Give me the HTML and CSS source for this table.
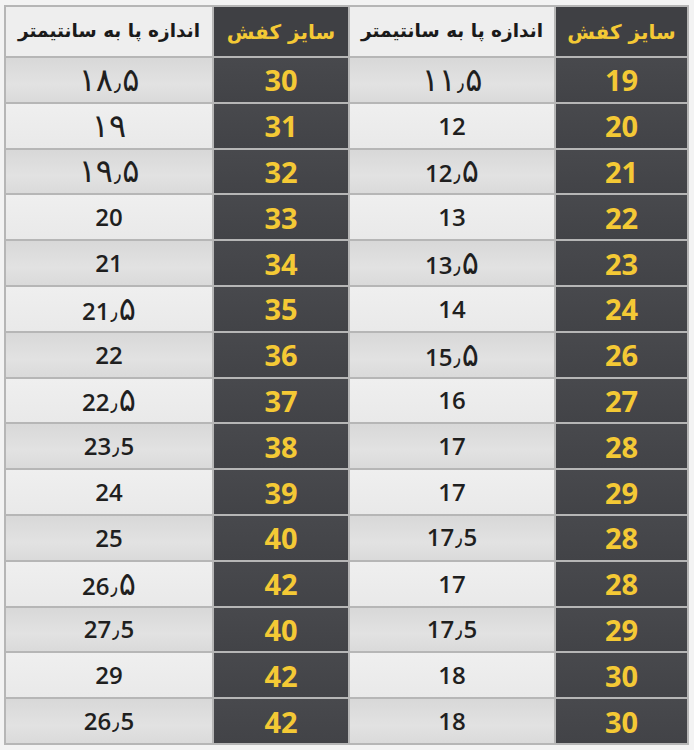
FILE: index.html
```html
<!DOCTYPE html>
<html lang="fa" dir="rtl">
<head>
<meta charset="utf-8">
<title>جدول سایز کفش</title>
<link rel="stylesheet" href="styles.css">
</head>
<body>
<div class="sheet">
  <div class="cell head size">سایز کفش</div>
  <div class="cell head cm">اندازه پا به سانتیمتر</div>
  <div class="cell head size">سایز کفش</div>
  <div class="cell head cm">اندازه پا به سانتیمتر</div>

  <div class="cell size">19</div><div class="cell cm odd"><span class="num"><span class="fa">۱۱</span><span class="sep">٫</span><span class="fa">۵</span></span></div><div class="cell size">30</div><div class="cell cm odd"><span class="num"><span class="fa">۱۸</span><span class="sep">٫</span><span class="fa">۵</span></span></div>
  <div class="cell size">20</div><div class="cell cm"><span class="num">12</span></div><div class="cell size">31</div><div class="cell cm"><span class="num"><span class="fa">۱۹</span></span></div>
  <div class="cell size">21</div><div class="cell cm odd"><span class="num">12<span class="sep">٫</span><span class="fa">۵</span></span></div><div class="cell size">32</div><div class="cell cm odd"><span class="num"><span class="fa">۱۹</span><span class="sep">٫</span><span class="fa">۵</span></span></div>
  <div class="cell size">22</div><div class="cell cm"><span class="num">13</span></div><div class="cell size">33</div><div class="cell cm"><span class="num">20</span></div>
  <div class="cell size">23</div><div class="cell cm odd"><span class="num">13<span class="sep">٫</span><span class="fa">۵</span></span></div><div class="cell size">34</div><div class="cell cm odd"><span class="num">21</span></div>
  <div class="cell size">24</div><div class="cell cm"><span class="num">14</span></div><div class="cell size">35</div><div class="cell cm"><span class="num">21<span class="sep">٫</span><span class="fa">۵</span></span></div>
  <div class="cell size">26</div><div class="cell cm odd"><span class="num">15<span class="sep">٫</span><span class="fa">۵</span></span></div><div class="cell size">36</div><div class="cell cm odd"><span class="num">22</span></div>
  <div class="cell size">27</div><div class="cell cm"><span class="num">16</span></div><div class="cell size">37</div><div class="cell cm"><span class="num">22<span class="sep">٫</span><span class="fa">۵</span></span></div>
  <div class="cell size">28</div><div class="cell cm odd"><span class="num">17</span></div><div class="cell size">38</div><div class="cell cm odd"><span class="num">23<span class="sep">٫</span>5</span></div>
  <div class="cell size">29</div><div class="cell cm"><span class="num">17</span></div><div class="cell size">39</div><div class="cell cm"><span class="num">24</span></div>
  <div class="cell size">28</div><div class="cell cm odd"><span class="num">17<span class="sep">٫</span>5</span></div><div class="cell size">40</div><div class="cell cm odd"><span class="num">25</span></div>
  <div class="cell size">28</div><div class="cell cm"><span class="num">17</span></div><div class="cell size">42</div><div class="cell cm"><span class="num">26<span class="sep">٫</span><span class="fa">۵</span></span></div>
  <div class="cell size">29</div><div class="cell cm odd"><span class="num">17<span class="sep">٫</span>5</span></div><div class="cell size">40</div><div class="cell cm odd"><span class="num">27<span class="sep">٫</span>5</span></div>
  <div class="cell size">30</div><div class="cell cm"><span class="num">18</span></div><div class="cell size">42</div><div class="cell cm"><span class="num">29</span></div>
  <div class="cell size">30</div><div class="cell cm odd"><span class="num">18</span></div><div class="cell size">42</div><div class="cell cm odd"><span class="num">26<span class="sep">٫</span>5</span></div>
</div>
</body>
</html>
```
FILE: styles.css
```css
html, body {
  margin: 0;
  padding: 0;
  background: #f3f3f3;
}

body {
  padding: 5px 5px 5px 4px;
  font-family: "Open Sans", "DejaVu Sans", sans-serif;
}

.sheet {
  direction: rtl;
  width: 681px;
  height: 736px;
  display: grid;
  grid-template-columns: 131px 204px 134px 206px;
  grid-template-rows: 49px repeat(15, 1fr);
  gap: 2px;
  padding: 2px;
  background: #b6b6b6;
}

.cell {
  display: flex;
  align-items: center;
  justify-content: center;
  white-space: nowrap;
  line-height: 1;
}

.num {
  direction: ltr;
  unicode-bidi: isolate;
}

.size {
  background: linear-gradient(180deg, #48494d 0%, #424347 100%);
  color: #f4c935;
  font-weight: 700;
  font-size: 29px;
}

.cm {
  background: linear-gradient(180deg, #efefef 0%, #e9e9e9 100%);
  color: #1f1f1f;
  font-weight: 600;
  font-size: 24px;
}

.cm.odd {
  background: linear-gradient(180deg, #d8d8d8 0%, #e2e2e2 60%, #dadada 100%);
}

.fa {
  font-family: "DejaVu Sans", sans-serif;
  font-weight: 400;
  font-size: 32px;
}

.sep {
  font-family: "DejaVu Sans", sans-serif;
  font-weight: 400;
  font-size: 22px;
  margin: 0 1px;
}

.head {
  font-family: "DejaVu Sans", sans-serif;
  font-weight: 700;
  font-size: 18.5px;
}

.head.size {
  background: #3f4044;
  font-size: 20px;
}

.head.cm {
  background: #eeeeee;
  color: #1a1a1a;
}
```
